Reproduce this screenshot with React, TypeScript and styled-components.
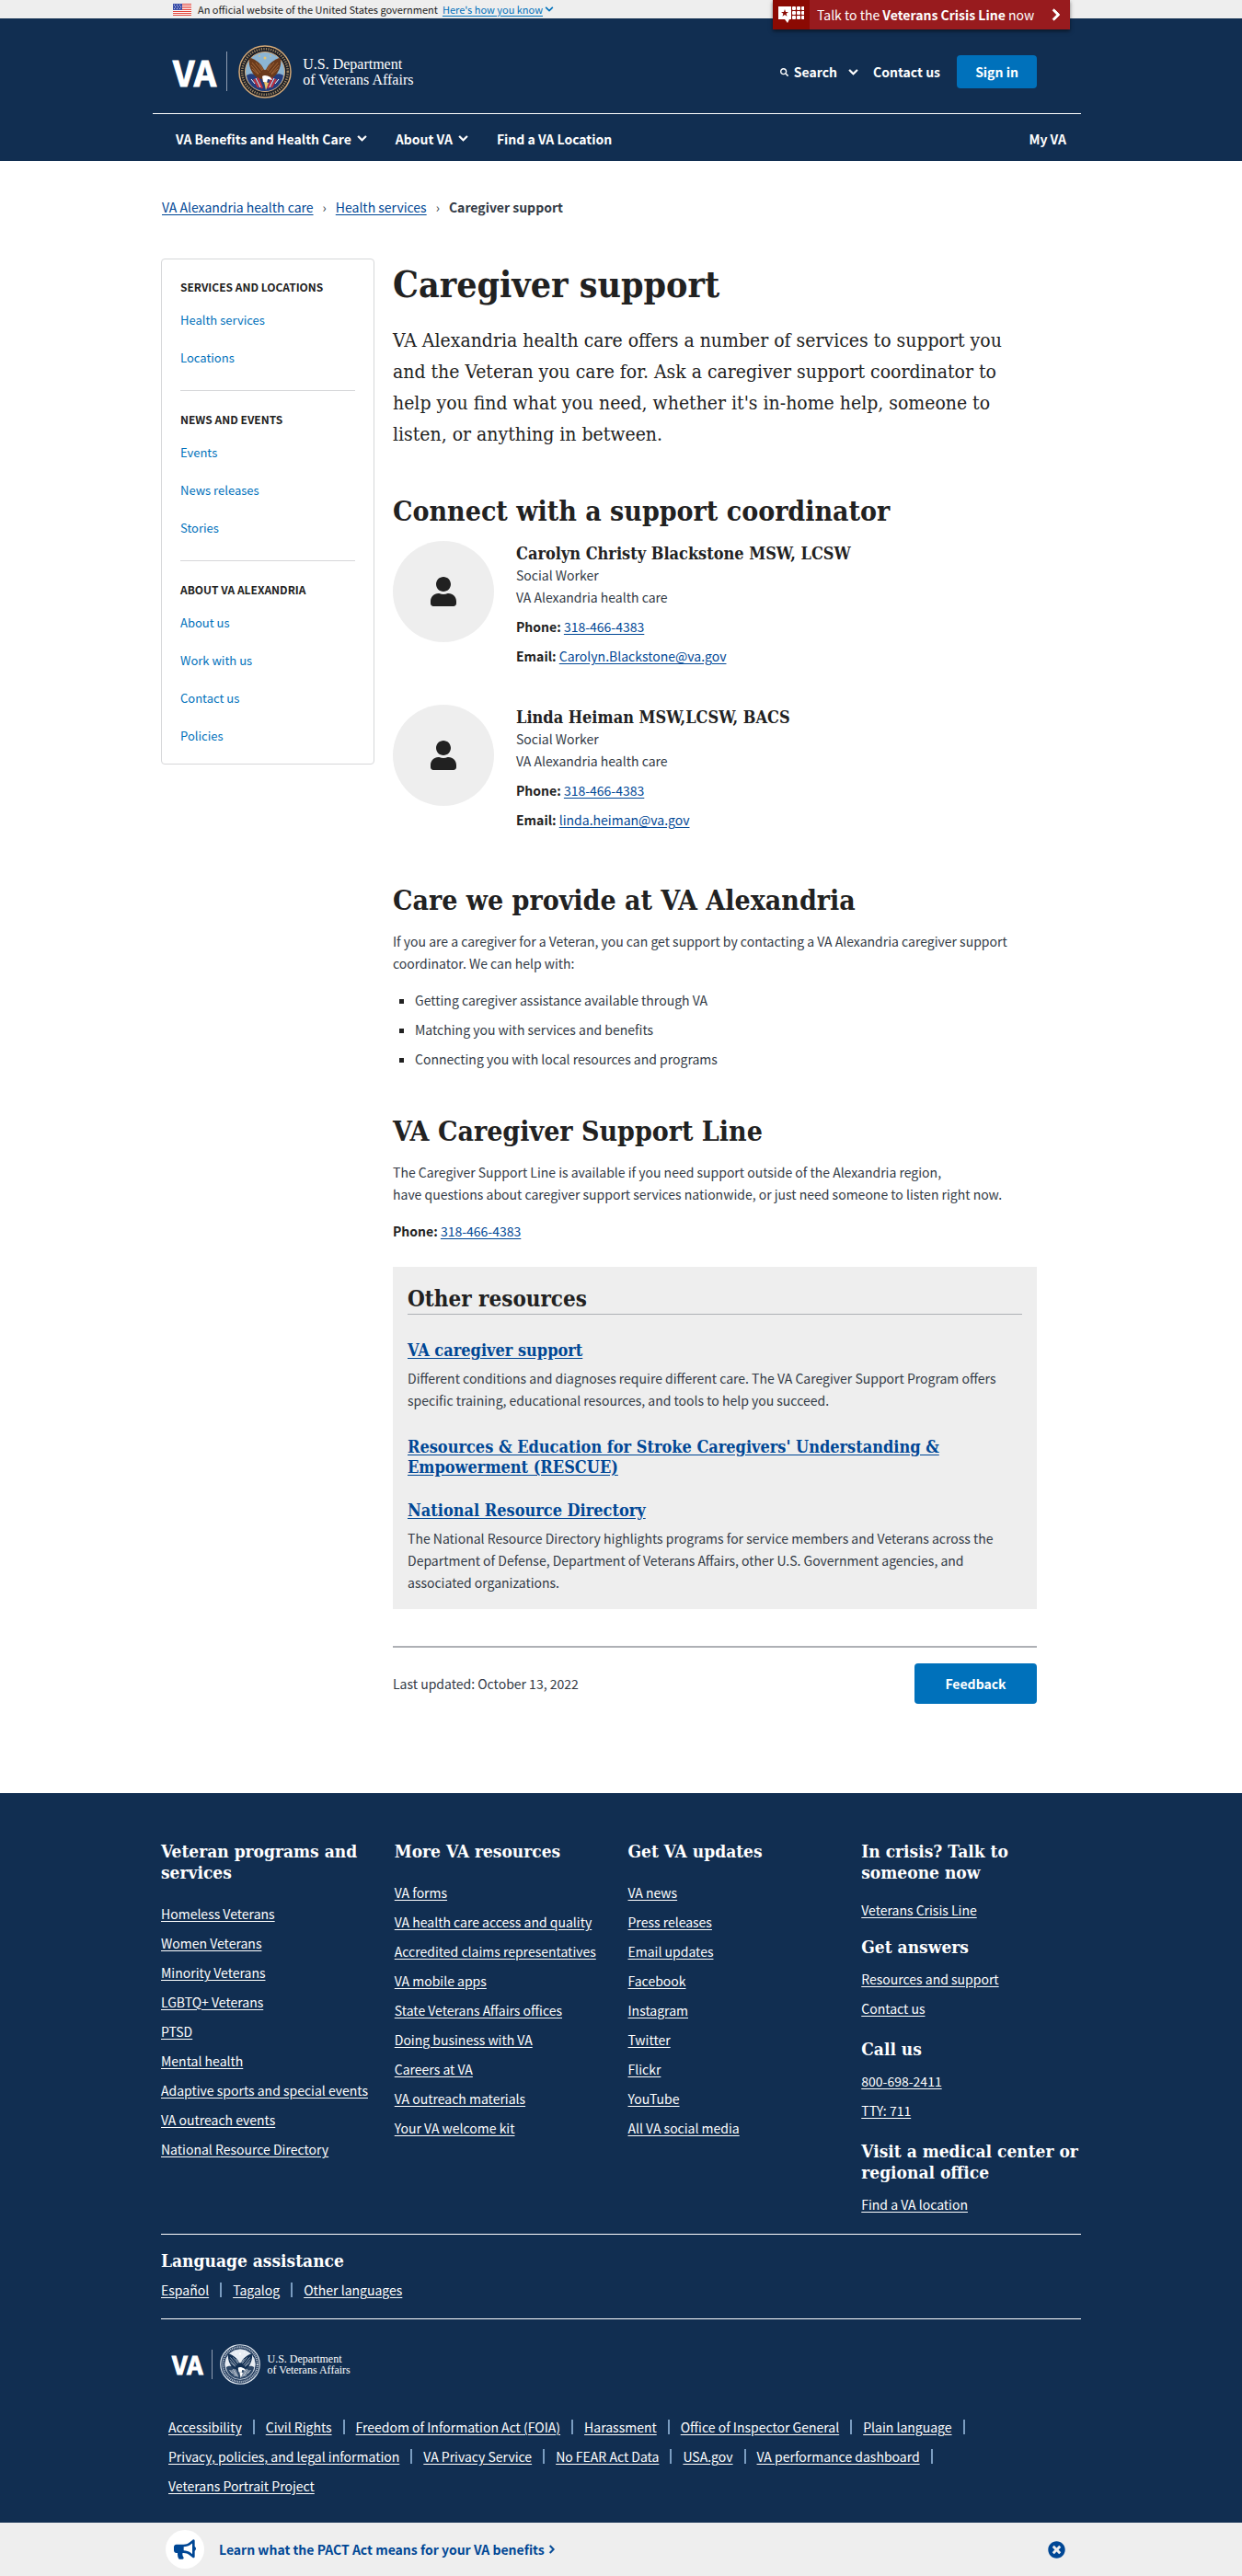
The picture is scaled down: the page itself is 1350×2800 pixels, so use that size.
import React from "react";
import styled, { createGlobalStyle, css } from "styled-components";
import {
  FaBullhorn,
  FaChevronDown,
  FaChevronRight,
  FaSearch,
  FaTimesCircle,
  FaUser,
} from "react-icons/fa";

const sans = `"Noto Sans CJK SC", "Open Sans", sans-serif`;
const slab = `"DejaVu Serif Condensed", "DejaVu Serif", serif`;
const logoSerif = `"Liberation Serif", serif`;

const color = {
  navy: "#112e51",
  ink: "#212121",
  body: "#323a45",
  link: "#004795",
  blue: "#0071bb",
  grey: "#eeeeee",
  line: "#aeb0b5",
  bar: "#7a9cc0",
};

const GlobalStyle = createGlobalStyle`
  *, *::before, *::after { box-sizing: border-box; }
  body {
    margin: 0;
    background: #fff;
    color: ${color.body};
    font: 400 14px/24px ${sans};
  }
  h1, h2, h3, h4, p, ul, ol { margin: 0; padding: 0; }
  ul, ol { list-style: none; }
  button { font: inherit; cursor: pointer; }
`;

const Container = styled.div`
  width: 100%;
  max-width: 1000px;
  margin: 0 auto;
`;

const Link = styled.a`
  color: ${color.link};
  text-decoration: underline;
  text-underline-offset: 2px;
`;

/* ---------- header ---------- */

const GovBar = styled.div`
  background: ${color.grey};
  font-size: 11px;
  line-height: 20px;
  color: ${color.ink};
`;

const GovInner = styled(Container)`
  display: flex;
  align-items: center;
  padding-left: 13px;
  position: relative;
`;

const GovText = styled.span`
  margin: 0 5px 0 7px;
`;

const GovToggle = styled.button`
  display: flex;
  align-items: center;
  gap: 2px;
  padding: 0;
  border: 0;
  background: none;
  color: ${color.blue};
  line-height: 20px;
  span {
    text-decoration: underline;
    text-underline-offset: 2px;
  }
`;

const CrisisLine = styled.button`
  position: absolute;
  top: 0;
  right: 12px;
  z-index: 2;
  display: flex;
  align-items: center;
  width: 323px;
  height: 32px;
  padding: 0 8px 0 0;
  border: 0;
  background: #981b1e;
  color: #fff;
  font-size: 14px;
  text-align: left;
  box-shadow: 0 2px 4px rgba(0, 0, 0, 0.5);
`;

const CrisisIcon = styled.span`
  display: flex;
  align-items: center;
  justify-content: center;
  width: 40px;
  height: 32px;
  margin-right: 8px;
  background: #8b0a03;
`;

const CrisisText = styled.span`
  flex: 1;
`;

const Header = styled.header`
  background: ${color.navy};
  color: #fff;
`;

const HeaderTop = styled.div`
  display: flex;
  align-items: center;
  justify-content: space-between;
  height: 104px;
  margin-left: -9px;
  padding: 0 48px 0 22px;
  border-bottom: 1px solid #fff;
`;

const Logo = styled.a<{ $small?: boolean }>`
  display: flex;
  align-items: center;
  width: max-content;
  color: #fff;
  text-decoration: none;
  padding-top: ${(p) => (p.$small ? 0 : 12)}px;
`;

const LogoMark = styled.span<{ $small?: boolean }>`
  font-weight: 700;
  font-size: ${(p) => (p.$small ? 27 : 38)}px;
  line-height: ${(p) => (p.$small ? 32 : 43)}px;
  padding-right: ${(p) => (p.$small ? 9 : 11)}px;
  border-right: 1px solid #8f9db1;
  -webkit-text-stroke: 1px #fff;
`;

const LogoSeal = styled.span<{ $small?: boolean }>`
  display: flex;
  margin: ${(p) => (p.$small ? "0 8px" : "0 12px")};
`;

const LogoName = styled.span<{ $small?: boolean }>`
  font-family: ${logoSerif};
  font-size: ${(p) => (p.$small ? 12 : 16)}px;
  line-height: ${(p) => (p.$small ? 12 : 17)}px;
`;

const Tools = styled.div`
  display: flex;
  align-items: center;
  padding-top: 13px;
  font-weight: 700;
`;

const PlainButton = styled.button`
  display: flex;
  align-items: center;
  gap: 6px;
  padding: 0;
  border: 0;
  background: none;
  color: #fff;
  font-weight: 700;
`;

const WhiteLink = styled.a`
  color: #fff;
  font-weight: 700;
  text-decoration: none;
`;

const SearchButton = styled(PlainButton)`
  margin-right: 16px;
  span {
    margin-right: 6px;
  }
`;

const buttonLook = css`
  border: 0;
  border-radius: 4px;
  background: ${color.blue};
  color: #fff;
  font-weight: 700;
`;

const SignIn = styled.button`
  ${buttonLook}
  width: 87px;
  height: 36px;
  margin-left: 18px;
`;

const MainNav = styled.nav`
  display: flex;
  align-items: center;
  gap: 31px;
  height: 51px;
  padding: 2px 16px 0;
`;

const NavEnd = styled(WhiteLink)`
  margin-left: auto;
`;

/* ---------- page body ---------- */

const Crumbs = styled.ol`
  display: flex;
  padding: 38px 0 44px 1px;
  li + li::before {
    content: "›";
    margin: 0 10px;
    color: ${color.body};
    font-weight: 400;
  }
  li:last-child {
    font-weight: 700;
  }
`;

const Columns = styled.div`
  display: grid;
  grid-template-columns: 232px minmax(0, 700px);
  column-gap: 20px;
  align-items: start;
  padding-bottom: 97px;
`;

const Sidebar = styled.nav`
  padding: 18px 20px;
  border: 1px solid #d6d7d9;
  border-radius: 4px;
`;

const SideGroup = styled.section`
  & + & {
    margin-top: 23px;
    padding-top: 19px;
    border-top: 1px solid #d6d7d9;
  }
`;

const SideTitle = styled.h2`
  color: ${color.ink};
  font-size: 12px;
  line-height: 24px;
  text-transform: uppercase;
`;

const SideList = styled.ul`
  display: grid;
  gap: 17px;
  margin-top: 12px;
  font-size: 13px;
  a {
    color: ${color.blue};
    text-decoration: none;
  }
`;

const Article = styled.article`
  padding-top: 5px;
`;

const PageTitle = styled.h1`
  color: ${color.ink};
  font: 700 39px/46px ${slab};
`;

const Lead = styled.p`
  max-width: 690px;
  margin-top: 21px;
  color: ${color.ink};
  font: 400 21px/34px ${slab};
`;

const SectionTitle = styled.h2`
  margin: 49px 0 14px;
  color: ${color.ink};
  font: 700 30px/36px ${slab};
`;

const People = styled.div`
  display: grid;
  gap: 41px;
  margin-bottom: 58px;
`;

const Person = styled.div`
  display: flex;
  gap: 24px;
`;

const Avatar = styled.div`
  display: flex;
  flex: none;
  align-items: center;
  justify-content: center;
  width: 110px;
  height: 110px;
  border-radius: 50%;
  background: ${color.grey};
  color: ${color.ink};
`;

const PersonName = styled.h3`
  padding-top: 2px;
  color: ${color.ink};
  font: 700 18px/23px ${slab};
`;

const Spaced = styled.p`
  margin-top: 8px;
`;

const Strong = styled.strong`
  color: ${color.ink};
`;

const Bullets = styled.ul`
  display: grid;
  gap: 8px;
  margin-top: 16px;
  padding-left: 24px;
  list-style: square;
  li::marker {
    color: ${color.ink};
  }
`;

const SupportPhone = styled.p`
  margin: 16px 0 27px;
`;

const Resources = styled.section`
  padding: 19px 16px 14px;
  background: ${color.grey};
`;

const ResourcesTitle = styled.h2`
  margin-bottom: 28px;
  border-bottom: 1px solid ${color.line};
  color: ${color.ink};
  font: 700 24px/32px ${slab};
`;

const Resource = styled.div`
  display: flex;
  flex-direction: column;
  & + & {
    margin-top: 25px;
  }
  h3 {
    font: 700 18px/22px ${slab};
  }
  p {
    margin: 7px 0 3px;
  }
`;

const Updated = styled.div`
  display: flex;
  align-items: center;
  justify-content: space-between;
  margin-top: 40px;
  padding-top: 17px;
  border-top: 2px solid ${color.line};
`;

const Feedback = styled.button`
  ${buttonLook}
  width: 133px;
  height: 44px;
`;

/* ---------- footer ---------- */

const Footer = styled.footer`
  background: ${color.navy};
  color: #fff;
  padding: 52px 0 28px;
  a {
    color: #fff;
  }
`;

const FooterGrid = styled.div`
  display: grid;
  grid-template-columns: repeat(4, minmax(0, 1fr));
  column-gap: 15px;
  padding-bottom: 20px;
`;

const FooterTitle = styled.h2`
  font: 700 19px/23px ${slab};
`;

const FooterLinks = styled.ul`
  display: grid;
  gap: 8px;
  margin-top: 21px;
`;

const ContactGroup = styled.div`
  & + & {
    margin-top: 21px;
  }
  &:nth-child(2) {
    margin-top: 17px;
  }
  ul {
    margin-top: 11px;
  }
  &:first-child ul {
    margin-top: 17px;
  }
`;

const Language = styled.section`
  padding: 17px 0 19px;
  border: solid #fff;
  border-width: 1px 0;
`;

const BarList = styled.ul`
  display: flex;
  flex-wrap: wrap;
  row-gap: 8px;
  li {
    display: flex;
    align-items: center;
  }
  li:not(:last-child)::after {
    content: "";
    width: 2px;
    height: 16px;
    margin: 0 12px;
    background: ${color.bar};
  }
`;

const LanguageLinks = styled(BarList)`
  margin-top: 8px;
`;

const FooterLogo = styled.div`
  padding: 27px 0 34px 12px;
`;

const LegalLinks = styled(BarList)`
  padding: 0 8px;
`;

const Promo = styled.aside`
  background: ${color.grey};
`;

const PromoInner = styled(Container)`
  display: flex;
  align-items: center;
  min-height: 58px;
  padding: 0 17px 0 5px;
`;

const PromoIcon = styled.span`
  display: flex;
  align-items: center;
  justify-content: center;
  width: 42px;
  height: 42px;
  margin-right: 16px;
  border-radius: 50%;
  background: #fff;
  color: ${color.link};
`;

const PromoLink = styled.a`
  display: flex;
  align-items: center;
  gap: 3px;
  color: ${color.link};
  font-weight: 700;
  text-decoration: none;
`;

const CloseButton = styled.button`
  display: flex;
  margin-left: auto;
  padding: 0;
  border: 0;
  background: none;
  color: ${color.link};
`;

/* ---------- drawings ---------- */

const Flag = () => (
  <svg width="20" height="13" viewBox="0 0 20 13" aria-hidden="true">
    <rect width="20" height="13" fill="#fff" />
    {[0, 2, 4, 6, 8, 10, 12].map((y) => (
      <rect key={y} y={y} width="20" height="1" fill="#e2443b" />
    ))}
    <rect width="10" height="7" fill="#3b4fa8" />
    {[1, 3, 5].map((y) =>
      [1, 4, 7].map((x) => (
        <rect key={`${x}-${y}`} x={x + (y === 3 ? 1 : 0)} y={y} width="1" height="1" fill="#c7cdf0" />
      ))
    )}
  </svg>
);

const CrisisGlyph = () => (
  <svg width="28" height="18" viewBox="0 0 28 18" aria-hidden="true">
    <path d="M0 0h14v14h-2l-2 4-3-4H0z" fill="#fff" />
    <path
      d="M7 3l1 3h3l-2.400 1.800.9 3L7 9l-2.500 1.800.9-3L3 6h3z"
      fill="#8b0a03"
    />
    {[0, 5, 10].map((y) =>
      [15, 20, 25].map((x) => (
        <rect key={`${x}-${y}`} x={x} y={y} width="4" height="4" rx="1" fill="#fff" />
      ))
    )}
  </svg>
);

const ThickDown = ({ size = 10 }: { size?: number }) => (
  <FaChevronDown size={size} stroke="currentColor" strokeWidth={28} />
);

const Wing = ({ fill, feather }: { fill: string; feather: string }) => (
  <g>
    <path d="M12 14c3 0 6 2 9 4 4 3 7 7 8 13l-1 6c-5 0-9-2-12-6-3-5-5-10-4-17z" fill={fill} />
    <path
      d="M15 19l9 11M14 22l8 9M19 19l8 10M15 26l7 6M23 21l4 6"
      stroke={feather}
      strokeWidth="0.8"
      fill="none"
    />
  </g>
);

const Seal = ({ size, mono }: { size: number; mono?: boolean }) => {
  const c = mono
    ? { rim: "#dfe6ee", ring: "#263f60", text: "#dfe6ee", sky: "#e8edf3", bird: "#112e51", feather: "#e8edf3", blue: "#2c4666", red: "#8797ab", gold: "#fff", head: "#fff" }
    : { rim: "#d3a877", ring: "#171c26", text: "#b3946a", sky: "#8cb5d3", bird: "#6a3a1c", feather: "#b0713f", blue: "#233c7c", red: "#c0303f", gold: "#e8c56d", head: "#fff" };
  return (
    <svg width={size} height={size} viewBox="0 0 58 58" aria-hidden="true">
      <circle cx="29" cy="29" r="28" fill={c.ring} stroke={c.rim} strokeWidth="1.500" />
      <circle cx="29" cy="29" r="24.800" fill="none" stroke={c.text} strokeWidth="2.600" strokeDasharray="1.300 1.300" opacity="0.85" />
      <circle cx="29" cy="29" r="21.500" fill={c.sky} stroke={c.rim} strokeWidth="1" />
      <path d="M9 33c4-3 9-2 13 1l7 5 7-5c4-3 9-4 13-1-1 9-9 17-20 17S10 42 9 33z" fill={c.blue} />
      <path d="M17 37l5 9M21 35l5 12M41 37l-5 9M37 35l-5 12" stroke={c.red} strokeWidth="2.200" />
      <path d="M19 36l5 10M39 36l-5 10M14 37l4 5M44 37l-4 5" stroke={c.head} strokeWidth="1" />
      <Wing fill={c.bird} feather={c.feather} />
      <g transform="translate(58 0) scale(-1 1)">
        <Wing fill={c.bird} feather={c.feather} />
      </g>
      <path d="M25 29c1-3 7-3 8 0l-1 9-3 5-3-5z" fill={c.bird} />
      <path d="M26 34c2-2 6-1 9 1l2 3-5-1-1 4-4-1z" fill={c.head} />
      <path d="M28 40l2 9 3-8z" fill={c.gold} />
      <circle cx="29" cy="14" r="1.500" fill={c.gold} />
      <circle cx="23" cy="12" r="0.800" fill={c.gold} />
      <circle cx="35" cy="12" r="0.800" fill={c.gold} />
    </svg>
  );
};

const VaLogo = ({ small }: { small?: boolean }) => (
  <Logo href="#home" $small={small} aria-label="VA, U.S. Department of Veterans Affairs">
    <LogoMark $small={small}>VA</LogoMark>
    <LogoSeal $small={small}>
      <Seal size={small ? 44 : 58} mono={small} />
    </LogoSeal>
    <LogoName $small={small}>
      U.S. Department
      <br />
      of Veterans Affairs
    </LogoName>
  </Logo>
);

/* ---------- content ---------- */

const sideGroups = [
  { title: "Services and locations", links: ["Health services", "Locations"] },
  { title: "News and events", links: ["Events", "News releases", "Stories"] },
  { title: "About VA Alexandria", links: ["About us", "Work with us", "Contact us", "Policies"] },
];

const people = [
  { name: "Carolyn Christy Blackstone MSW, LCSW", email: "Carolyn.Blackstone@va.gov" },
  { name: "Linda Heiman MSW,LCSW, BACS", email: "linda.heiman@va.gov" },
];

const resources = [
  {
    title: "VA caregiver support",
    text: "Different conditions and diagnoses require different care. The VA Caregiver Support Program offers specific training, educational resources, and tools to help you succeed.",
  },
  { title: "Resources & Education for Stroke Caregivers' Understanding & Empowerment (RESCUE)" },
  {
    title: "National Resource Directory",
    text: "The National Resource Directory highlights programs for service members and Veterans across the Department of Defense, Department of Veterans Affairs, other U.S. Government agencies, and associated organizations.",
  },
];

const footerColumns = [
  {
    title: "Veteran programs and services",
    links: ["Homeless Veterans", "Women Veterans", "Minority Veterans", "LGBTQ+ Veterans", "PTSD", "Mental health", "Adaptive sports and special events", "VA outreach events", "National Resource Directory"],
  },
  {
    title: "More VA resources",
    links: ["VA forms", "VA health care access and quality", "Accredited claims representatives", "VA mobile apps", "State Veterans Affairs offices", "Doing business with VA", "Careers at VA", "VA outreach materials", "Your VA welcome kit"],
  },
  {
    title: "Get VA updates",
    links: ["VA news", "Press releases", "Email updates", "Facebook", "Instagram", "Twitter", "Flickr", "YouTube", "All VA social media"],
  },
];

const contactGroups = [
  { title: "In crisis? Talk to someone now", links: ["Veterans Crisis Line"] },
  { title: "Get answers", links: ["Resources and support", "Contact us"] },
  { title: "Call us", links: ["800-698-2411", "TTY: 711"] },
  { title: "Visit a medical center or regional office", links: ["Find a VA location"] },
];

const legalLinks = [
  "Accessibility", "Civil Rights", "Freedom of Information Act (FOIA)", "Harassment",
  "Office of Inspector General", "Plain language", "Privacy, policies, and legal information",
  "VA Privacy Service", "No FEAR Act Data", "USA.gov", "VA performance dashboard",
  "Veterans Portrait Project",
];

const LinkItems = ({ items }: { items: string[] }) => (
  <>
    {items.map((item) => (
      <li key={item}>
        <Link href="#">{item}</Link>
      </li>
    ))}
  </>
);

export default function App() {
  return (
    <>
      <GlobalStyle />
      <GovBar>
        <GovInner>
          <Flag />
          <GovText>An official website of the United States government</GovText>
          <GovToggle type="button">
            <span>Here's how you know</span>
            <FaChevronDown size={10} />
          </GovToggle>
          <CrisisLine type="button">
            <CrisisIcon>
              <CrisisGlyph />
            </CrisisIcon>
            <CrisisText>
              Talk to the <b>Veterans Crisis Line</b> now
            </CrisisText>
            <FaChevronRight size={14} stroke="currentColor" strokeWidth={36} />
          </CrisisLine>
        </GovInner>
      </GovBar>

      <Header>
        <Container>
          <HeaderTop>
            <VaLogo />
            <Tools>
              <SearchButton type="button">
                <FaSearch size={9} />
                <span>Search</span>
                <ThickDown size={11} />
              </SearchButton>
              <WhiteLink href="#contact">Contact us</WhiteLink>
              <SignIn type="button">Sign in</SignIn>
            </Tools>
          </HeaderTop>
          <MainNav aria-label="Main">
            <PlainButton type="button">
              VA Benefits and Health Care <ThickDown size={11} />
            </PlainButton>
            <PlainButton type="button">
              About VA <ThickDown size={11} />
            </PlainButton>
            <WhiteLink href="#locations">Find a VA Location</WhiteLink>
            <NavEnd href="#my-va">My VA</NavEnd>
          </MainNav>
        </Container>
      </Header>

      <Container as="main">
        <nav aria-label="Breadcrumb">
          <Crumbs>
            <li><Link href="#">VA Alexandria health care</Link></li>
            <li><Link href="#">Health services</Link></li>
            <li aria-current="page">Caregiver support</li>
          </Crumbs>
        </nav>

        <Columns>
          <Sidebar aria-label="Section">
            {sideGroups.map((group) => (
              <SideGroup key={group.title}>
                <SideTitle>{group.title}</SideTitle>
                <SideList>
                  <LinkItems items={group.links} />
                </SideList>
              </SideGroup>
            ))}
          </Sidebar>

          <Article>
            <PageTitle>Caregiver support</PageTitle>
            <Lead>
              VA Alexandria health care offers a number of services to support you and the
              Veteran you care for. Ask a caregiver support coordinator to help you find what
              you need, whether it's in-home help, someone to listen, or anything in between.
            </Lead>

            <SectionTitle>Connect with a support coordinator</SectionTitle>
            <People>
              {people.map((person) => (
                <Person key={person.email}>
                  <Avatar>
                    <FaUser size={32} />
                  </Avatar>
                  <div>
                    <PersonName>{person.name}</PersonName>
                    <p>Social Worker</p>
                    <p>VA Alexandria health care</p>
                    <Spaced>
                      <Strong>Phone:</Strong> <Link href="tel:3184664383">318-466-4383</Link>
                    </Spaced>
                    <Spaced>
                      <Strong>Email:</Strong> <Link href={`mailto:${person.email}`}>{person.email}</Link>
                    </Spaced>
                  </div>
                </Person>
              ))}
            </People>

            <SectionTitle>Care we provide at VA Alexandria</SectionTitle>
            <p>
              If you are a caregiver for a Veteran, you can get support by contacting a VA
              Alexandria caregiver support coordinator. We can help with:
            </p>
            <Bullets>
              <li>Getting caregiver assistance available through VA</li>
              <li>Matching you with services and benefits</li>
              <li>Connecting you with local resources and programs</li>
            </Bullets>

            <SectionTitle>VA Caregiver Support Line</SectionTitle>
            <p>
              The Caregiver Support Line is available if you need support outside of the
              Alexandria region,
              <br />
              have questions about caregiver support services nationwide, or just need someone to
              listen right now.
            </p>
            <SupportPhone>
              <Strong>Phone:</Strong> <Link href="tel:3184664383">318-466-4383</Link>
            </SupportPhone>

            <Resources>
              <ResourcesTitle>Other resources</ResourcesTitle>
              {resources.map((item) => (
                <Resource key={item.title}>
                  <h3>
                    <Link href="#">{item.title}</Link>
                  </h3>
                  {item.text && <p>{item.text}</p>}
                </Resource>
              ))}
            </Resources>

            <Updated>
              <span>Last updated: October 13, 2022</span>
              <Feedback type="button">Feedback</Feedback>
            </Updated>
          </Article>
        </Columns>
      </Container>

      <Footer>
        <Container>
          <FooterGrid>
            {footerColumns.map((column) => (
              <div key={column.title}>
                <FooterTitle>{column.title}</FooterTitle>
                <FooterLinks>
                  <LinkItems items={column.links} />
                </FooterLinks>
              </div>
            ))}
            <div>
              {contactGroups.map((group) => (
                <ContactGroup key={group.title}>
                  <FooterTitle>{group.title}</FooterTitle>
                  <FooterLinks>
                    <LinkItems items={group.links} />
                  </FooterLinks>
                </ContactGroup>
              ))}
            </div>
          </FooterGrid>

          <Language>
            <FooterTitle>Language assistance</FooterTitle>
            <LanguageLinks>
              <LinkItems items={["Español", "Tagalog", "Other languages"]} />
            </LanguageLinks>
          </Language>

          <FooterLogo>
            <VaLogo small />
          </FooterLogo>

          <LegalLinks>
            <LinkItems items={legalLinks} />
          </LegalLinks>
        </Container>
      </Footer>

      <Promo>
        <PromoInner>
          <PromoIcon>
            <FaBullhorn size={24} />
          </PromoIcon>
          <PromoLink href="#pact">
            Learn what the PACT Act means for your VA benefits{" "}
            <FaChevronRight size={10} stroke="currentColor" strokeWidth={28} />
          </PromoLink>
          <CloseButton type="button" aria-label="Close">
            <FaTimesCircle size={19} />
          </CloseButton>
        </PromoInner>
      </Promo>
    </>
  );
}
